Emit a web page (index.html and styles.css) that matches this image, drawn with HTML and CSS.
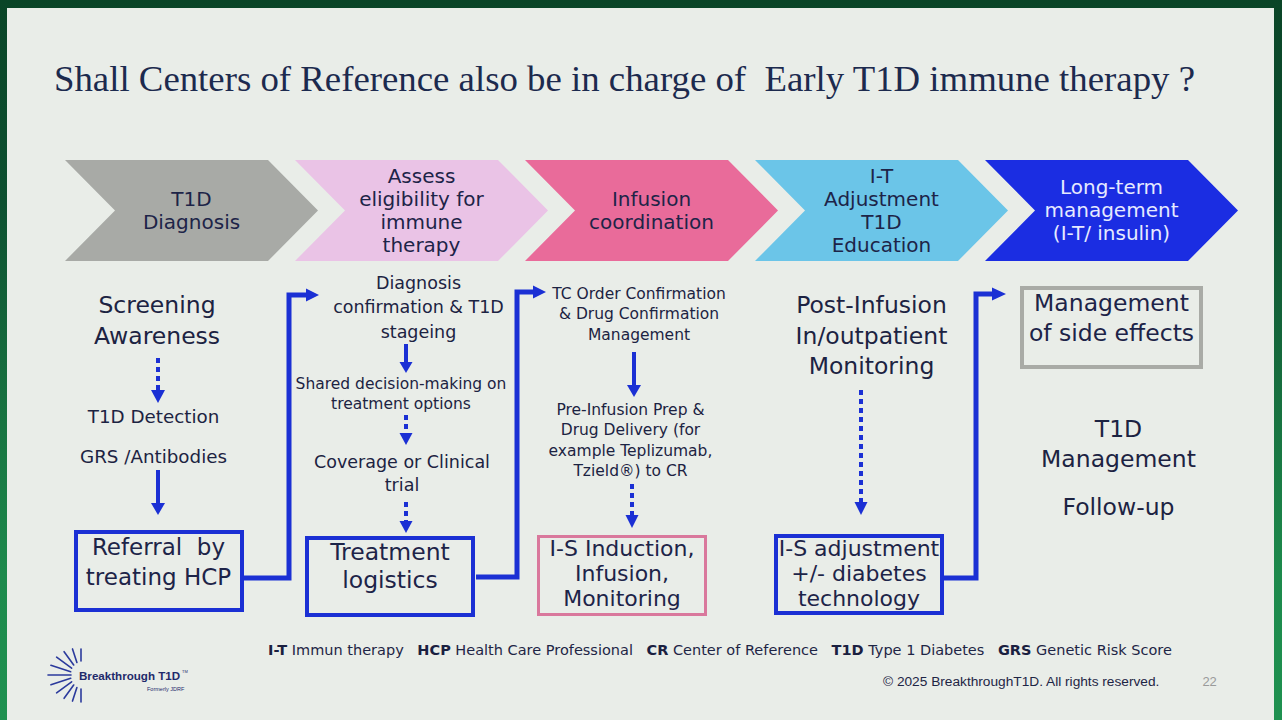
FILE: index.html
```html
<!DOCTYPE html>
<html lang="en">
<head>
<meta charset="utf-8">
<title>Early T1D immune therapy</title>
<link rel="stylesheet" href="styles.css">
</head>
<body>
<div class="slide">
  <h1 class="title">Shall Centers of Reference also be in charge of&nbsp; Early T1D immune therapy ?</h1>

  <div class="chevrons">
    <div class="chev chev-grey">T1D<br>Diagnosis</div>
    <div class="chev chev-lpink">Assess<br>eligibility for<br>immune<br>therapy</div>
    <div class="chev chev-pink">Infusion<br>coordination</div>
    <div class="chev chev-lblue">I-T<br>Adjustment<br>T1D<br>Education</div>
    <div class="chev chev-blue">Long-term<br>management<br>(I-T/ insulin)</div>
  </div>

  <div class="diagram">
    <div class="col c1">
      <div class="txt big c1-a">Screening<br>Awareness</div>
      <svg class="arr c1-d" width="16" height="45" viewBox="0 0 16 45"><line class="dash" x1="8" y1="0" x2="8" y2="33"/><polygon points="1,32 15,32 8,45"/></svg>
      <div class="txt mid c1-b">T1D Detection</div>
      <div class="txt mid c1-c">GRS /Antibodies</div>
      <svg class="arr c1-s" width="16" height="45" viewBox="0 0 16 45"><line x1="8" y1="0" x2="8" y2="34"/><polygon points="1,33 15,33 8,45"/></svg>
      <div class="box b-ref"><div class="t">Referral&nbsp; by<br>treating HCP</div></div>
    </div>

    <div class="col c2">
      <div class="txt c2-a">Diagnosis<br>confirmation &amp; T1D<br>stageing</div>
      <svg class="arr c2-s" width="16" height="29" viewBox="0 0 16 29"><line x1="8" y1="0" x2="8" y2="19"/><polygon points="1.5,18 14.5,18 8,29"/></svg>
      <div class="txt small c2-b">Shared decision-making on<br>treatment options</div>
      <svg class="arr c2-d1" width="16" height="30" viewBox="0 0 16 30"><line class="dash" x1="8" y1="0" x2="8" y2="19"/><polygon points="1.5,18 14.5,18 8,30"/></svg>
      <div class="txt c2-c">Coverage or Clinical<br>trial</div>
      <svg class="arr c2-d2" width="16" height="31" viewBox="0 0 16 31"><line class="dash" x1="8" y1="0" x2="8" y2="20"/><polygon points="1.5,19 14.5,19 8,31"/></svg>
      <div class="box b-treat"><div class="t">Treatment<br>logistics</div></div>
    </div>

    <div class="col c3">
      <div class="txt small c3-a">TC Order Confirmation<br>&amp; Drug Confirmation<br>Management</div>
      <svg class="arr c3-s" width="16" height="45" viewBox="0 0 16 45"><line x1="8" y1="0" x2="8" y2="34"/><polygon points="1,33 15,33 8,45"/></svg>
      <div class="txt small c3-b">Pre-Infusion Prep &amp;<br>Drug Delivery (for<br>example Teplizumab,<br>Tzield®) to CR</div>
      <svg class="arr c3-d" width="16" height="44" viewBox="0 0 16 44"><line class="dash" x1="8" y1="0" x2="8" y2="32"/><polygon points="1.5,31 14.5,31 8,44"/></svg>
      <div class="box b-pink"><div class="t">I-S Induction,<br>Infusion,<br>Monitoring</div></div>
    </div>

    <div class="col c4">
      <div class="txt big c4-a">Post-Infusion<br>In/outpatient<br>Monitoring</div>
      <svg class="arr c4-d" width="16" height="125" viewBox="0 0 16 125"><line class="dash" x1="8" y1="0" x2="8" y2="113"/><polygon points="1.5,112 14.5,112 8,125"/></svg>
      <div class="box b-adj"><div class="t">I-S adjustment<br>+/- diabetes<br>technology</div></div>
    </div>

    <div class="col c5">
      <div class="box b-grey"><div class="t">Management<br>of side effects</div></div>
      <div class="txt big c5-a">T1D<br>Management</div>
      <div class="txt big c5-b">Follow-up</div>
    </div>

    <svg class="links" width="1267" height="355" viewBox="7 270 1267 355">
      <polyline points="244,578 289,578 289,295 308,295"/>
      <polygon points="306,288.5 319,295 306,301.5"/>
      <polyline points="476,577 517,577 517,292 535,292"/>
      <polygon points="533,285.5 546,292 533,298.5"/>
      <polyline points="944,578 976,578 976,294 994,294"/>
      <polygon points="992,287.5 1006,294 992,300.5"/>
    </svg>
  </div>

  <div class="bottom">
    <div class="logo">
      <svg width="160" height="60" viewBox="0 0 160 60">
        <g class="rays">
          <line x1="36" y1="16" x2="36" y2="4"/>
          <line x1="31.9" y1="17.4" x2="27.5" y2="3.9"/>
          <line x1="28.7" y1="20" x2="19.1" y2="6.7"/>
          <line x1="26.6" y1="23.2" x2="11.6" y2="12.2"/>
          <line x1="25.7" y1="26.7" x2="5.9" y2="20.2"/>
          <line x1="26" y1="30" x2="3" y2="30"/>
          <line x1="25.7" y1="33.3" x2="5.9" y2="39.8"/>
          <line x1="26.6" y1="36.8" x2="11.6" y2="47.8"/>
          <line x1="28.7" y1="40" x2="19.1" y2="53.3"/>
          <line x1="31.9" y1="42.6" x2="27.5" y2="56.1"/>
          <line x1="36" y1="44" x2="36" y2="57"/>
        </g>
        <text class="brand" x="34" y="34.5">Breakthrough T1D</text>
        <text class="tm" x="137" y="28">TM</text>
        <text class="formerly" x="102" y="45.5">Formerly JDRF</text>
      </svg>
    </div>
    <div class="info">
      <div class="legend"><b>I-T</b> Immun therapy <b>HCP</b> Health Care Professional <b>CR</b> Center of Reference <b>T1D</b> Type 1 Diabetes <b>GRS</b> Genetic Risk Score</div>
      <div class="copyrow"><span class="copy">© 2025 BreakthroughT1D. All rights reserved.</span><span class="pnum">22</span></div>
    </div>
  </div>
</div>
</body>
</html>
```

FILE: styles.css
```css
:root {
  --blue: #1b30d4;
  --ink: #1c2342;
}

html, body {
  margin: 0;
  padding: 0;
}

body {
  width: 1282px;
  height: 720px;
  overflow: hidden;
  background: linear-gradient(to bottom, #0a4527 0%, #0d5030 28%, #17703f 55%, #1d8a4c 80%, #1f9150 100%);
}

.slide {
  margin: 8px 0 0 7px;
  width: 1267px;
  height: 712px;
  background: #e9ede8;
  position: relative;
  overflow: hidden;
  font-family: "DejaVu Sans", Verdana, sans-serif;
  color: var(--ink);
}

.title {
  margin: 0;
  padding: 51px 0 0 47px;
  font-family: "Liberation Serif", "Times New Roman", serif;
  font-weight: normal;
  font-size: 36.8px;
  line-height: 40px;
  color: #1c2a4e;
  white-space: nowrap;
}

/* chevron process row */
.chevrons {
  display: flex;
  margin-top: 61px;
  padding-left: 58px;
  height: 101px;
}

.chev {
  flex: none;
  width: 253px;
  height: 101px;
  margin-right: -23px;
  clip-path: polygon(0 0, 203px 0, 253px 50%, 203px 100%, 0 100%, 50px 50%);
  display: flex;
  align-items: center;
  justify-content: center;
  text-align: center;
  font-size: 20px;
  line-height: 23px;
  color: #1d2448;
}

.chev-grey { background: #a8aaa6; }
.chev-lpink { background: #eac3e6; }
.chev-pink { background: #e96b9a; }
.chev-lblue { background: #6bc5e8; }
.chev-blue { background: #1b2de2; color: #e6eaff; }

/* lower flow diagram */
.diagram {
  position: relative;
  display: flex;
  height: 355px;
  margin-top: 9px;
}

.col {
  flex: none;
  display: flex;
  flex-direction: column;
  align-items: center;
}

.c1 { width: 200px; margin-left: 50px; }
.c2 { width: 240px; margin-left: 33px; }
.c3 { width: 220px; margin-left: 0; }
.c4 { width: 200px; margin-left: 20px; }
.c5 { width: 220px; margin-left: 40px; }

.txt {
  text-align: center;
  white-space: nowrap;
  font-size: 17.5px;
  line-height: 24.25px;
}

.txt.big { font-size: 23.5px; line-height: 30.5px; }
.txt.mid { font-size: 18.3px; line-height: 22px; }
.txt.small { font-size: 15.5px; line-height: 20.5px; }

.arr { display: block; flex: none; }
.arr line { stroke: var(--blue); stroke-width: 4; }
.arr line.dash { stroke-dasharray: 5 4; }
.arr polygon { fill: var(--blue); }

.box {
  box-sizing: border-box;
  flex: none;
  border: 4px solid var(--blue);
  text-align: center;
  white-space: nowrap;
  color: #1d2448;
}

.box .t { margin-top: -2px; }

/* column 1 */
.c1-a { margin-top: 20px; }
.c1-d { margin-top: 7px; margin-left: 1px; }
.c1-b { margin-top: 3px; margin-right: 7px; }
.c1-c { margin-top: 18px; margin-right: 7px; }
.c1-s { margin-top: 2px; margin-left: 2px; }
.b-ref {
  margin-top: 15px;
  margin-left: 3px;
  width: 170px;
  height: 82px;
  font-size: 23px;
  line-height: 30px;
}

/* column 2 */
.c2-a { margin-top: 1px; margin-left: 17px; }
.c2-s { margin-right: 8px; }
.c2-b { margin-top: 1px; margin-right: 18px; line-height: 20.5px; }
.c2-d1 { margin-right: 8px; }
.c2-c { margin-top: 6px; margin-right: 16px; line-height: 23.5px; }
.c2-d2 { margin-top: 4px; margin-right: 8px; }
.b-treat {
  margin-top: 3px;
  margin-right: 40px;
  width: 170px;
  height: 81px;
  font-size: 23.5px;
  line-height: 28px;
}

/* column 3 */
.c3-a { margin-top: 13.5px; margin-right: 2px; line-height: 21px; }
.c3-s { margin-top: 6.5px; margin-right: 12px; }
.c3-b { margin-top: 3.3px; margin-right: 19px; line-height: 20.33px; }
.c3-d { margin-top: 2.4px; margin-right: 16px; }
.b-pink {
  margin-top: 7px;
  margin-right: 36px;
  width: 170px;
  height: 81px;
  border: 3.5px solid #d9789c;
  font-size: 22px;
  line-height: 25px;
}

/* column 4 */
.c4-a { margin-top: 20px; margin-left: 3px; line-height: 31.25px; font-size: 24px; }
.c4-d { margin-top: 8.4px; margin-right: 18px; }
.b-adj {
  margin-top: 19px;
  margin-right: 22px;
  width: 170px;
  height: 81px;
  font-size: 22px;
  line-height: 25px;
}

/* column 5 */
.b-grey {
  margin-top: 16px;
  margin-right: 17px;
  width: 183px;
  height: 83px;
  border-color: #a9aba6;
  font-size: 23.5px;
  line-height: 30px;
}
.c5-a { margin-top: 44.5px; margin-right: 3px; font-size: 23px; line-height: 30px; }
.c5-b { margin-top: 17.5px; margin-right: 3px; font-size: 23px; line-height: 30px; }

.links {
  position: absolute;
  left: 0;
  top: 0;
  pointer-events: none;
}
.links polyline {
  fill: none;
  stroke: var(--blue);
  stroke-width: 5;
  stroke-linejoin: miter;
}
.links polygon { fill: var(--blue); }

/* footer */
.bottom {
  display: flex;
  margin-top: 15px;
}

.logo {
  flex: none;
  width: 160px;
  margin-left: 38px;
  padding-top: 5px;
}
.logo svg { display: block; }
.rays line { stroke: #2b3a9c; stroke-width: 1.6; stroke-linecap: round; }
.brand {
  font-family: "Liberation Sans", Arial, sans-serif;
  font-weight: bold;
  font-size: 11.6px;
  fill: #1f2a6b;
}
.tm {
  font-family: "Liberation Sans", Arial, sans-serif;
  font-size: 4px;
  fill: #1f2a6b;
}
.formerly {
  font-family: "Liberation Sans", Arial, sans-serif;
  font-size: 5.5px;
  fill: #1f2a6b;
}

.info {
  margin-left: 63px;
}

.legend {
  font-size: 14.5px;
  line-height: 20px;
  white-space: nowrap;
  color: #1e2545;
}
.legend b { margin-left: 9px; color: #1a2040; }
.legend b:first-child { margin-left: 0; }

.copyrow {
  display: flex;
  margin-top: 12.7px;
  padding-left: 615px;
  font-family: "Liberation Sans", Arial, sans-serif;
  font-size: 13.7px;
  line-height: 18px;
  white-space: nowrap;
}
.copy { color: #1e2545; }
.pnum { margin-left: 43px; color: #9a9b9a; font-size: 13px; }
```
